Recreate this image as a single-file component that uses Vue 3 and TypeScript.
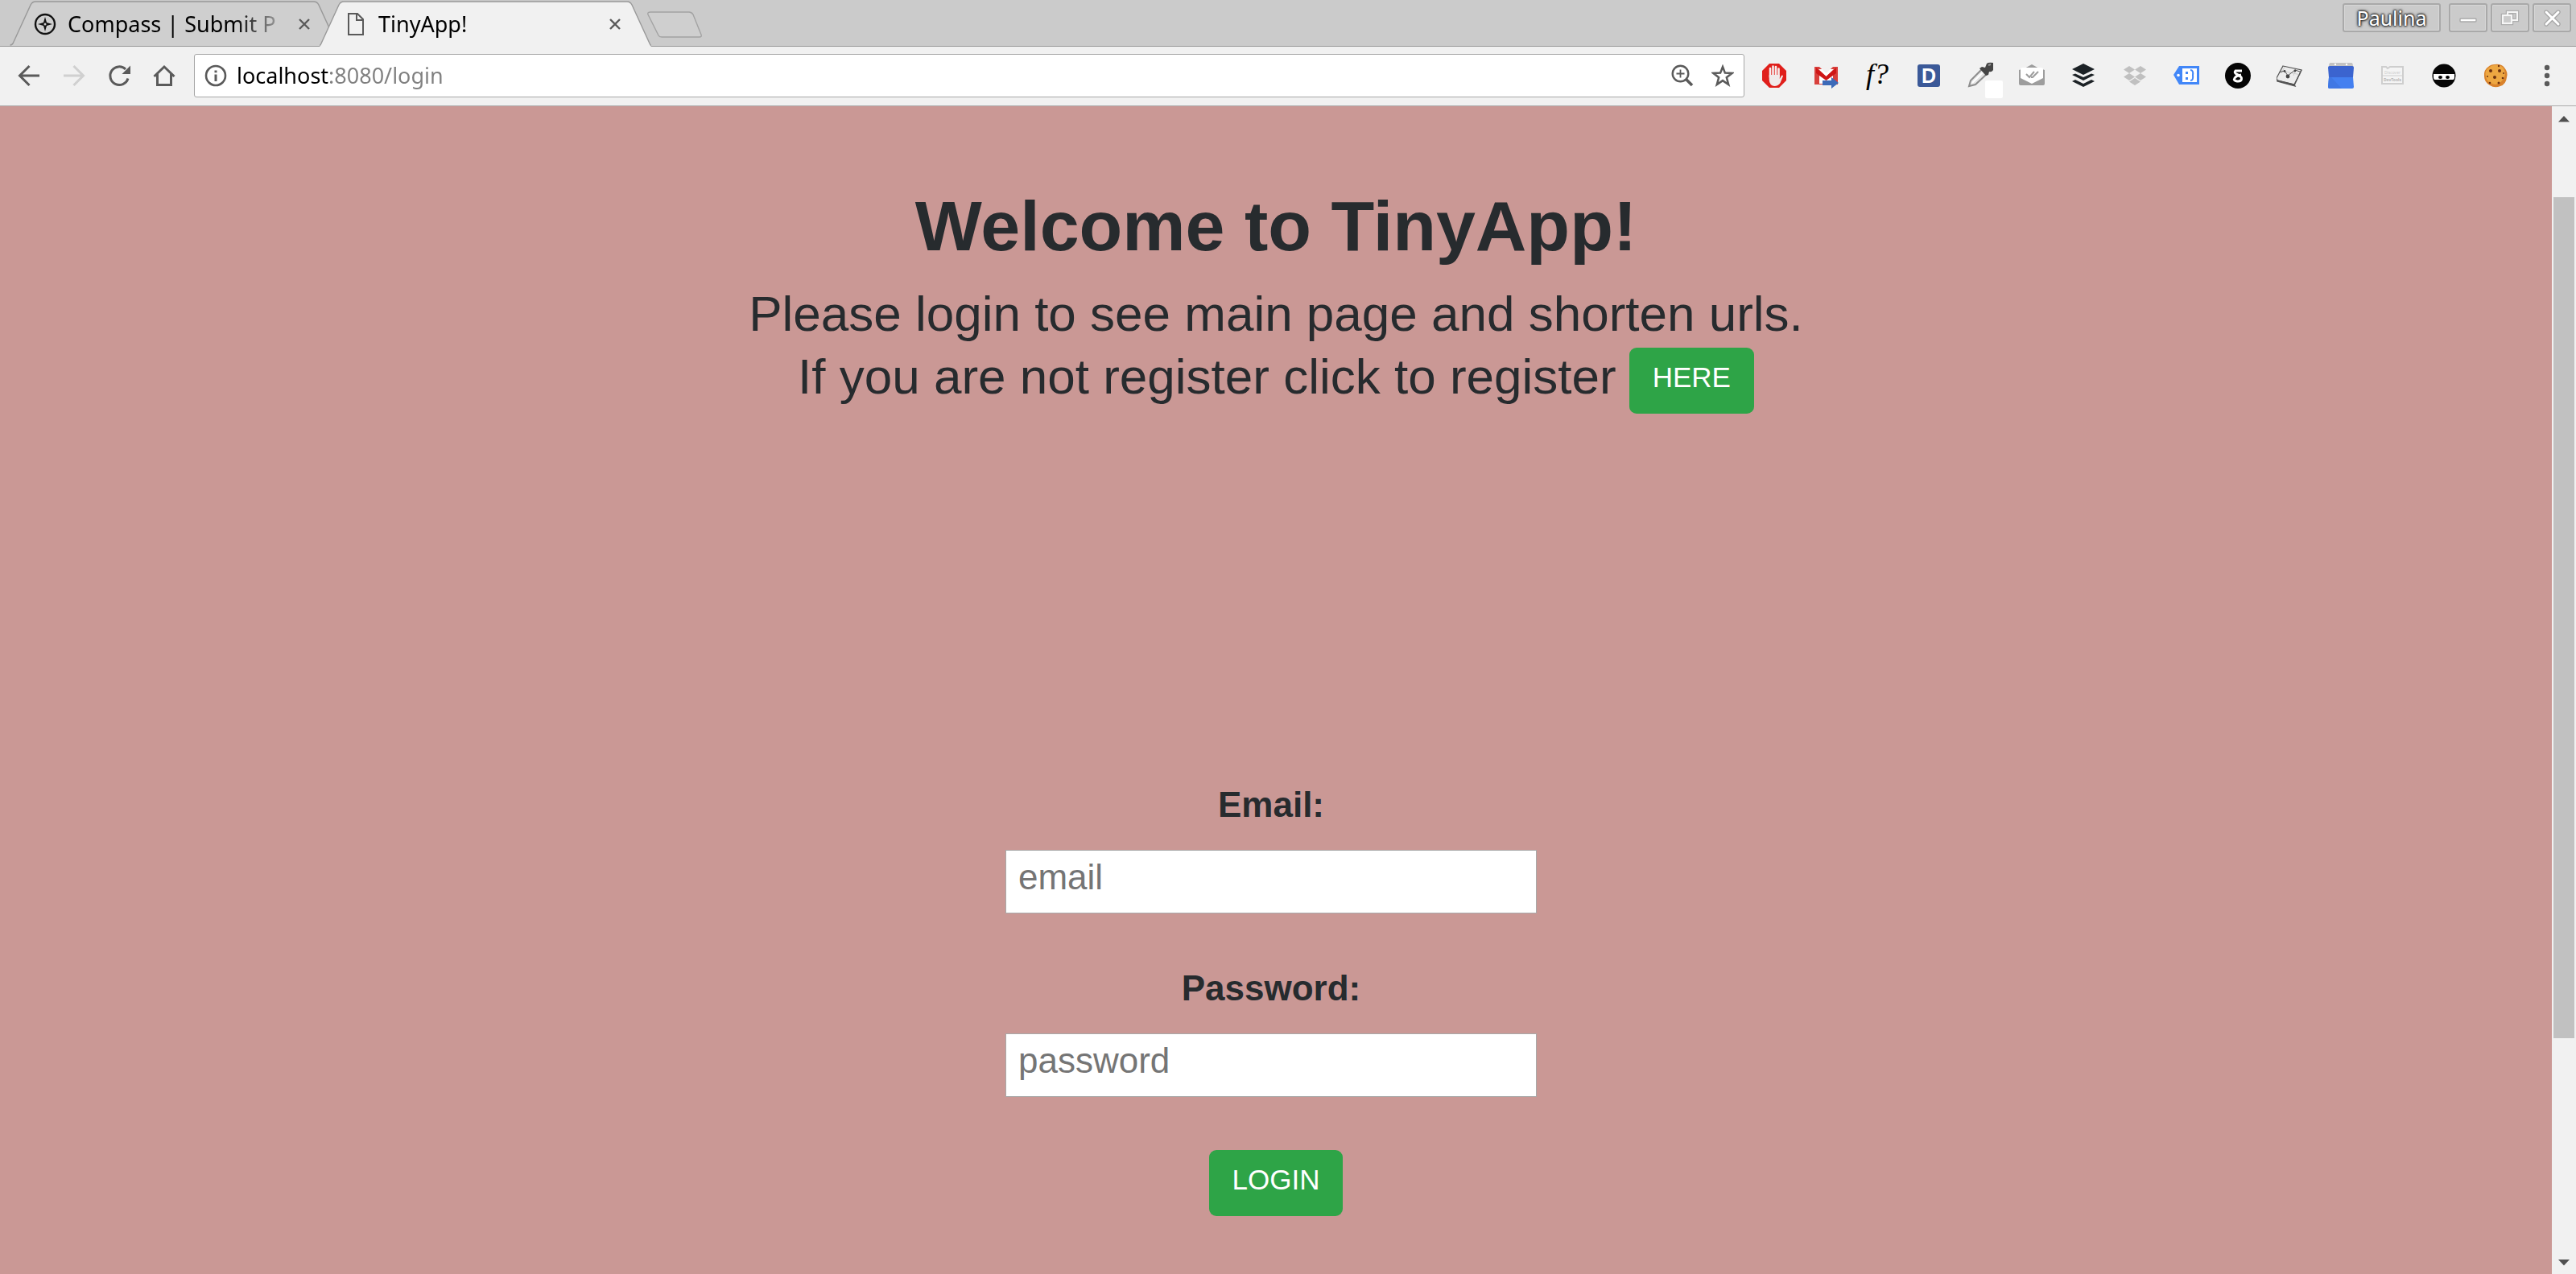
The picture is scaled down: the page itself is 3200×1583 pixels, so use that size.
<script setup lang="ts">
import { ref } from 'vue'

interface Tab {
  title: string
  icon: 'compass' | 'page'
  active: boolean
}

const tabs: Tab[] = [
  { title: 'Compass | Submit P', icon: 'compass', active: false },
  { title: 'TinyApp!', icon: 'page', active: true },
]

const address = ref('localhost:8080/login')
const email = ref('')
const password = ref('')
</script>

<template>
  <div class="browser">
    <header class="tab-strip">
      <div class="tabs">
        <div v-for="tab in tabs" :key="tab.title" class="tab" :class="{ active: tab.active }">
          <svg class="tab-shape" viewBox="0 0 412 58" aria-hidden="true">
            <path class="tab-fill" d="M0 58 Q1 57 2 54 L24 6 Q26 2 30 2 H382 Q386 2 388 6 L410 54 Q411 57 412 58Z" />
            <path class="tab-line" d="M-2 57 Q1 57 2 54 L24 6 Q26 2 30 2 H382 Q386 2 388 6 L410 54 Q411 57 414 57" />
          </svg>
          <svg v-if="tab.icon === 'compass'" class="tab-icon" viewBox="0 0 28 28" aria-hidden="true">
            <circle cx="14" cy="14" r="12" fill="none" stroke="#111" stroke-width="2.4" />
            <path d="M14 5 L16 12 L23 14 L16 16 L14 23 L12 16 L5 14 L12 12Z" fill="#111" />
            <circle cx="14" cy="14" r="1.5" fill="#cfcfcf" />
          </svg>
          <svg v-else class="tab-icon" viewBox="0 0 28 28" aria-hidden="true">
            <path d="M5 1 H16 L23 8 V27 H5Z M15 1 V9 H23" fill="none" stroke="#5a5a5a" stroke-width="2" />
          </svg>
          <span class="tab-title">{{ tab.title }}</span>
          <button class="tab-close" type="button" aria-label="Close tab">
            <svg viewBox="0 0 14 14"><path d="M1 1 L13 13 M13 1 L1 13" stroke="#5a5a5a" stroke-width="2.4" /></svg>
          </button>
        </div>
        <button class="new-tab" type="button" aria-label="New tab">
          <svg viewBox="0 0 68 34">
            <path d="M4 1 H52 Q55 1 57 4 L67 29 Q68 32 65 32 H18 Q15 32 14 30 L1 4 Q0 1 4 1Z" fill="#cfcfcf" stroke="#a3a3a3" stroke-width="1.4" />
          </svg>
        </button>
      </div>
      <div class="window-controls">
        <button class="user" type="button">Paulina</button>
        <button class="win" type="button" aria-label="Minimize">
          <svg viewBox="0 0 48 36"><rect x="14" y="19" width="20" height="4" rx="1" fill="#fff" stroke="#a9a9a9" stroke-width="1.4" /></svg>
        </button>
        <button class="win" type="button" aria-label="Restore">
          <svg viewBox="0 0 48 36" fill="none">
            <g stroke="#a9a9a9" stroke-width="4.4"><rect x="21" y="11" width="12" height="10" /><rect x="15" y="15" width="11" height="10" /></g>
            <g stroke="#f6f6f6" stroke-width="2.2"><rect x="21" y="11" width="12" height="10" /><rect x="15" y="15" width="11" height="10" fill="#cbcbcb" /></g>
          </svg>
        </button>
        <button class="win" type="button" aria-label="Close window">
          <svg viewBox="0 0 48 36" fill="none" stroke-linecap="round">
            <path d="M17 11 L32 26 M32 11 L17 26" stroke="#a5a5a5" stroke-width="5.4" />
            <path d="M17 11 L32 26 M32 11 L17 26" stroke="#fff" stroke-width="3" />
          </svg>
        </button>
      </div>
    </header>

    <nav class="toolbar">
      <div class="nav-buttons">
        <button type="button" aria-label="Back">
          <svg viewBox="0 0 32 32" fill="none" stroke="#5a5a5a" stroke-width="3"><path d="M29 16 H5 M16.500 4 L4.500 16 L16.500 28" /></svg>
        </button>
        <button type="button" aria-label="Forward" disabled>
          <svg viewBox="0 0 32 32" fill="none" stroke="#d0d0d0" stroke-width="3"><path d="M3 16 H27 M15.500 4 L27.500 16 L15.500 28" /></svg>
        </button>
        <button type="button" aria-label="Reload">
          <svg viewBox="0 0 32 32">
            <path d="M27 19.500 A11.300 11.300 0 1 1 24 8" fill="none" stroke="#5a5a5a" stroke-width="3" />
            <path d="M30 3.500 V14 H19.500Z" fill="#5a5a5a" />
          </svg>
        </button>
        <button type="button" aria-label="Home">
          <svg viewBox="0 0 32 32" fill="none" stroke="#5a5a5a" stroke-width="3"><path d="M3.500 17 L16 5 L28.500 17 M7.500 14 V27.500 H24.500 V14" /></svg>
        </button>
      </div>

      <div class="address-bar">
        <svg class="bar-icon" viewBox="0 0 28 28" aria-hidden="true">
          <circle cx="14" cy="14" r="12" fill="none" stroke="#5a5a5a" stroke-width="2.6" />
          <path d="M14 7.500 V10.300 M14 12.500 V21" stroke="#5a5a5a" stroke-width="3" />
        </svg>
        <input v-model="address" class="address" type="text" aria-label="Address" spellcheck="false" />
        <button type="button" aria-label="Zoom">
          <svg class="bar-icon" viewBox="0 0 28 28" fill="none" stroke="#5a5a5a">
            <circle cx="11.500" cy="11.500" r="9.800" stroke-width="2.400" />
            <path d="M18 18 L26 26" stroke-width="3.600" />
            <path d="M6.500 11.500 H16.500 M11.500 6.500 V16.500" stroke-width="1.800" />
          </svg>
        </button>
        <button type="button" aria-label="Bookmark this page">
          <svg class="bar-icon" viewBox="0 0 28 28">
            <path d="M14 3 L16.900 10.600 L25.500 11 L18.800 16.200 L21.200 25 L14 20.100 L6.800 25 L9.200 16.200 L2.500 11 L11.100 10.600Z" fill="none" stroke="#5a5a5a" stroke-width="2.500" />
          </svg>
        </button>
      </div>

      <div class="extensions">
        <button type="button" aria-label="Ad blocker">
          <svg viewBox="0 0 32 32">
            <path d="M10 1 H22 L31 10 V22 L22 31 H10 L1 22 V10Z" fill="#e01f1b" />
            <path d="M11 18 V7 M14.500 16 V4.500 M18 16 V5 M21.500 17 V7.500" stroke="#f5eeee" stroke-width="2.600" stroke-linecap="round" />
            <path d="M9.700 15 H22.800 V20 L25 16 Q26.500 15 27 16.500 L23.500 25 Q21 29 16 29 Q10 28 9.700 21Z" fill="#f0eaea" />
          </svg>
        </button>
        <button type="button" aria-label="Mail forwarder">
          <svg viewBox="0 0 32 32">
            <rect x="2" y="5" width="29" height="22" fill="#d8403c" />
            <path d="M7 8 H26 L16.500 17Z M8 26 V14 L16.500 21 L25 14 V26Z" fill="#fff" />
            <path d="M4 6 L16.500 17 L29 6 V13 L16.500 22 L4 13Z" fill="#cf1717" />
            <path d="M8 5 H25 L16.500 13Z" fill="#f2f0f0" />
            <path d="M12 22 H23 V18 L32 25 L23 32 V28 H12Z" fill="#3c6ab8" />
          </svg>
        </button>
        <button class="font-finder" type="button" aria-label="What font">f?</button>
        <button type="button" aria-label="D"><span class="d-badge">D</span></button>
        <button type="button" aria-label="Color picker">
          <svg class="wide" viewBox="0 0 48 48">
            <path d="M4 31 L6 24 L20 10 L26 16 L12 29Z" fill="#e6e6e6" stroke="#8d8d8d" stroke-width="2" />
            <path d="M8 27 L21 14" stroke="#fff" stroke-width="2" />
            <path d="M17 9 L20 7 L24 8 L26 3 Q28 1 34 2 V11 Q32 14 29 13 L28 17 L25 18Z" fill="#454545" />
            <path d="M28 5 L31 4" stroke="#999" stroke-width="2" />
            <rect x="24" y="24" width="22" height="22" rx="2" fill="#fff" />
          </svg>
        </button>
        <button type="button" aria-label="Mail tracker">
          <svg viewBox="0 0 32 32">
            <path d="M7 7 L16 2 L25 7Z M0 9 L3 8 V18 L16 25 L29 18 V8 L32 9 V26 Q32 28 30 28 H2 Q0 28 0 26Z" fill="#9d9d9d" />
            <path d="M4 6 H28 Q30 6 30 8 V19 L16 26 L2 19 V8 Q2 6 4 6Z" fill="#fff" />
            <path d="M9 14 L13 18 L19 11 M15 18 L17 18 L24 11" fill="none" stroke="#9d9d9d" stroke-width="2" />
          </svg>
        </button>
        <button type="button" aria-label="Buffer">
          <svg viewBox="0 0 32 32" fill="#1c2226">
            <path d="M16 1 L30 8 L16 15 L2 8Z" />
            <path d="M2 15 L6 13.500 L16 18 L26 13.500 L30 15 L16 22Z M2 23 L6 21 L16 26 L26 21 L30 23 L16 30Z" />
          </svg>
        </button>
        <button type="button" aria-label="Dropbox">
          <svg viewBox="0 0 32 32" fill="#c0c0c0">
            <path d="M9 4 L16 8.500 L9 13 L2 8.500Z M23 4 L30 8.500 L23 13 L16 8.500Z M9 13 L16 17.500 L9 22 L2 17.500Z M23 13 L30 17.500 L23 22 L16 17.500Z M16 19 L23 23.500 L16 28 L9 23.500Z" />
          </svg>
        </button>
        <button type="button" aria-label="Price tag">
          <svg viewBox="0 0 32 32">
            <path d="M0 15 L7 4 H32 V27 H7Z" fill="#4287f8" />
            <rect x="11" y="7" width="18" height="17" fill="#fff" />
            <circle cx="6" cy="15.500" r="1.800" fill="#fff" />
            <path d="M15 11 H18 V14 H15Z M15 18 H18 V21 H15Z" fill="#4287f8" />
            <path d="M21 9 Q25 9 24 15.500 Q25 22 21 22" fill="none" stroke="#4287f8" stroke-width="2" />
          </svg>
        </button>
        <button type="button" aria-label="Search helper">
          <svg viewBox="0 0 32 32">
            <circle cx="16" cy="16" r="16" fill="#050505" />
            <path d="M21 10 H13 Q11 12 14 14 Q21 17 20.500 20 Q20 23.500 15 23 Q10 22 12 19 Q14 16 20 15" fill="none" stroke="#fff" stroke-width="3" />
          </svg>
        </button>
        <button type="button" aria-label="Site analytics">
          <svg viewBox="0 0 32 32">
            <path d="M8 4 L31 9 L22 27 L1 22 L0 19Z" fill="#ececec" stroke="#555" stroke-width="1.200" />
            <path d="M6 10 L30 15 M10 5 L6 13 M24 8 L21 16" stroke="#ccc" stroke-width="1" />
            <path d="M1 22 L22 27 L23 29 L1 23Z M22 28 L31 9" stroke="#555" stroke-width="1.400" />
            <path d="M3 12 L10 10 L14 16 L23 9 L29 11" fill="none" stroke="#555" stroke-width="1" />
            <circle cx="14" cy="17" r="2.400" fill="#444" /><circle cx="23" cy="10" r="1.400" fill="#444" /><circle cx="10" cy="10.500" r="1.400" fill="#444" />
          </svg>
        </button>
        <button type="button" aria-label="Calendar">
          <svg viewBox="0 0 32 32">
            <path d="M3 0 H29 Q31 0 31 5 H1 Q1 0 3 0Z" fill="#c3c3c3" />
            <circle cx="9" cy="2" r="1.200" fill="#fff" /><circle cx="23" cy="2" r="1.200" fill="#fff" />
            <path d="M0 6 Q0 4 2 4 H30 Q32 4 32 6 L31 18 H1Z" fill="#3b64cf" />
            <path d="M1 18 H31 L32 30 Q32 32 30 32 H2 Q0 32 0 30Z" fill="#4480f0" />
            <path d="M4 18 L17 32 H2 Q0 32 0 30 L1 18Z" fill="#4078e4" />
          </svg>
        </button>
        <button type="button" aria-label="DevTools tips">
          <svg viewBox="0 0 32 32">
            <path d="M3 5 H8 L10 7 L13 5 H29 V26 H3Z" fill="#f4f4f4" stroke="#cecece" stroke-width="2" />
            <path d="M3 16 H29" stroke="#cecece" stroke-width="1" />
            <text x="16" y="14" text-anchor="middle" font-size="5" fill="#cccccc">Discover</text>
            <text x="16" y="23" text-anchor="middle" font-size="5" font-weight="bold" fill="#b4b4b4">DevTools</text>
          </svg>
        </button>
        <button type="button" aria-label="Ninja">
          <svg viewBox="0 0 32 32">
            <circle cx="16" cy="16" r="14.500" fill="#060606" />
            <path d="M3 14 H29 V18 Q29 21 27 21 H5 Q3 21 3 18Z" fill="#fff" />
            <ellipse cx="11.500" cy="18" rx="2.500" ry="2" /><ellipse cx="20.500" cy="18" rx="2.500" ry="2" />
          </svg>
        </button>
        <button type="button" aria-label="Cookies">
          <svg viewBox="0 0 32 32">
            <path d="M15 2 Q23 1 27 6 Q32 12 30 18 Q29 27 22 29 Q15 32 9 28 Q2 24 2 17 Q1 9 7 5 Q10 2 15 2Z" fill="#d9822b" />
            <path d="M14 3 Q22 2 26 7 Q29 13 27 18 Q24 25 16 27 Q6 26 4 18 Q2 9 8 6 Q11 3 14 3Z" fill="#eda742" />
            <g fill="#6b3010"><circle cx="10" cy="10" r="2" /><circle cx="21" cy="10" r="2" /><circle cx="15" cy="18" r="2" /><circle cx="25" cy="19" r="1.300" /><circle cx="20" cy="25" r="1.500" /><circle cx="9" cy="25" r="1.300" /><circle cx="6" cy="17" r="1" /><circle cx="20" cy="4" r="1.200" /><circle cx="26" cy="13" r="1" /></g>
          </svg>
        </button>
        <button type="button" aria-label="Menu">
          <svg viewBox="0 0 32 32" fill="#5a5a5a"><circle cx="16" cy="6" r="3.200" /><circle cx="16" cy="16" r="3.200" /><circle cx="16" cy="26" r="3.200" /></svg>
        </button>
      </div>
    </nav>

    <div class="viewport">
      <main class="page">
        <h1>Welcome to TinyApp!</h1>
        <p class="lead">Please login to see main page and shorten urls.</p>
        <p class="lead register">
          <span>If you are not register click to register</span>
          <a class="btn" href="#register">HERE</a>
        </p>
        <form class="login" @submit.prevent>
          <div class="fields">
            <div class="field">
              <label for="email">Email:</label>
              <input id="email" v-model="email" type="email" placeholder="email" />
            </div>
            <div class="field">
              <label for="password">Password:</label>
              <input id="password" v-model="password" type="password" placeholder="password" />
            </div>
          </div>
          <button class="btn" type="submit">LOGIN</button>
        </form>
      </main>
      <div class="scrollbar" aria-hidden="true">
        <svg class="arrow" viewBox="0 0 14 8"><path d="M0 7.500 L7 0 L14 7.500Z" fill="#505050" /></svg>
        <div class="track"><div class="thumb"></div></div>
        <svg class="arrow" viewBox="0 0 14 8"><path d="M0 0 H14 L7 7.500Z" fill="#505050" /></svg>
      </div>
    </div>
  </div>
</template>

<style>
body {
  margin: 0;
}
</style>

<style scoped>
* {
  box-sizing: border-box;
}

.browser {
  display: flex;
  flex-direction: column;
  min-height: 100vh;
  font-family: "Noto Sans", "Open Sans", sans-serif;
  background: #f1f1f1;
}

button {
  display: flex;
  align-items: center;
  justify-content: center;
  padding: 0;
  border: 0;
  background: none;
  font-family: inherit;
}

svg {
  display: block;
}

.tab-strip {
  display: flex;
  justify-content: space-between;
  height: 58px;
  padding: 0 6px 0 11px;
  background: #cbcbcb;
  box-shadow: inset 0 -1px #999;
}

.tabs {
  display: flex;
}

.tab {
  position: relative;
  display: flex;
  align-items: center;
  gap: 14px;
  width: 412px;
  height: 58px;
  margin-right: -26px;
  padding: 2px 38px 0 31px;
}

.tab.active {
  z-index: 1;
}

.tab-shape {
  position: absolute;
  inset: 0;
  width: 412px;
  height: 58px;
}

.tab-fill {
  fill: #cfcfcf;
}

.tab-line {
  fill: none;
  stroke: #999;
  stroke-width: 1.4;
}

.tab:not(.active) .tab-shape {
  border-bottom: 1px solid #999;
}

.tab.active .tab-fill {
  fill: #f1f1f1;
}

.tab-icon {
  position: relative;
  width: 28px;
  height: 28px;
}

.tab-title {
  position: relative;
  flex: 1;
  overflow: hidden;
  font-size: 27px;
  line-height: 40px;
  white-space: nowrap;
  color: #000;
  mask-image: linear-gradient(to right, #000 76%, transparent 102%);
}

.tab-close {
  position: relative;
}

.tab-close svg {
  width: 14px;
  height: 14px;
}

.new-tab {
  align-self: flex-start;
  margin: 14px 0 0 21px;
}

.new-tab svg {
  width: 68px;
  height: 34px;
}

.window-controls {
  display: flex;
  gap: 4px;
  padding-top: 4px;
}

.user,
.win {
  height: 36px;
  border: 2px solid #a9a9a9;
  border-radius: 3px;
  box-shadow: inset 0 0 0 1px #d6d6d6;
}

.user {
  width: 122px;
  margin-right: 6px;
  font-size: 25px;
  line-height: 32px;
  color: #fff;
  text-shadow: 0 0 2px #333, 0 0 2px #333, 0 0 3px #333, 0 0 3px #333, 0 0 4px #444;
}

.win {
  width: 48px;
}

.win svg {
  flex: none;
  width: 48px;
  height: 36px;
}

.toolbar {
  display: flex;
  align-items: center;
  height: 74px;
  padding: 0 4px 2px 8px;
  background: #f1f1f1;
  border-bottom: 1px solid #acacac;
}

.nav-buttons,
.extensions {
  display: flex;
}

.nav-buttons button {
  width: 56px;
  height: 56px;
}

.nav-buttons svg,
.extensions svg {
  width: 32px;
  height: 32px;
}

.address-bar {
  display: flex;
  flex: 1;
  align-items: center;
  gap: 22px;
  height: 54px;
  margin: 0 5px 0 9px;
  padding: 0 12px;
  background: #fff;
  border: 1px solid #a6a6a6;
  border-radius: 3px;
}

.bar-icon {
  width: 28px;
  height: 28px;
}

.address {
  flex: 1;
  margin-left: -10px;
  padding: 0;
  border: 0;
  font-family: inherit;
  font-size: 27px;
  line-height: 40px;
  color: transparent;
  background: linear-gradient(to right, #000 115px, #808080 115px);
  background-clip: text;
  outline: 0;
}

.extensions button {
  width: 64px;
  height: 54px;
}

.extensions .wide {
  width: 48px;
  height: 48px;
  margin: 12px 0 0 12px;
}

.extensions .font-finder {
  padding-bottom: 4px;
  font-family: "Liberation Serif", serif;
  font-size: 36px;
  font-style: italic;
  color: #000;
}

.d-badge {
  width: 28px;
  height: 28px;
  border-radius: 3px;
  background: #3b5998;
  font-family: "Liberation Sans", sans-serif;
  font-size: 25px;
  font-weight: bold;
  line-height: 28px;
  color: #fff;
}

.viewport {
  display: flex;
  flex: 1;
  font-family: "Liberation Sans", Arial, sans-serif;
  color: #272b2e;
}

.page {
  display: flex;
  flex: 1;
  flex-direction: column;
  align-items: center;
  padding: 96px 32px 64px;
  background: #ca9895;
}

h1 {
  margin: 0 0 20px;
  font-size: 88px;
  line-height: 106px;
}

.lead {
  margin: 0;
  font-size: 62px;
  line-height: 71px;
}

.register {
  display: flex;
  gap: 16px;
  align-items: flex-start;
  margin-top: 7px;
}

.btn {
  padding: 11px 29px 19px;
  border-radius: 9px;
  background: #2ea447;
  font-family: inherit;
  font-size: 35px;
  line-height: 52px;
  color: #fff;
  text-decoration: none;
}

.login {
  display: flex;
  flex-direction: column;
  gap: 66px;
  align-items: center;
  margin-top: 453px;
}

.fields {
  display: flex;
  flex-direction: column;
  gap: 60px;
  margin-right: 12px;
}

.field {
  display: flex;
  flex-direction: column;
  gap: 23px;
}

.field label {
  font-size: 44px;
  font-weight: bold;
  line-height: 66px;
  text-align: center;
}

.field input {
  width: 660px;
  height: 79px;
  padding: 0 15px 11px;
  border: 1px solid #a9a9a9;
  background: #fff;
  font-family: inherit;
  font-size: 44px;
  color: #272b2e;
}

.field input::placeholder {
  color: #757575;
}

.scrollbar {
  display: flex;
  flex-direction: column;
  align-items: center;
  width: 30px;
  padding: 12px 2px 10px;
  background: #f1f1f1;
}

.arrow {
  width: 14px;
  height: 8px;
}

.track {
  flex: 1;
  width: 26px;
  padding: 93px 0 275px;
}

.thumb {
  height: 100%;
  background: #c1c1c1;
}
</style>
